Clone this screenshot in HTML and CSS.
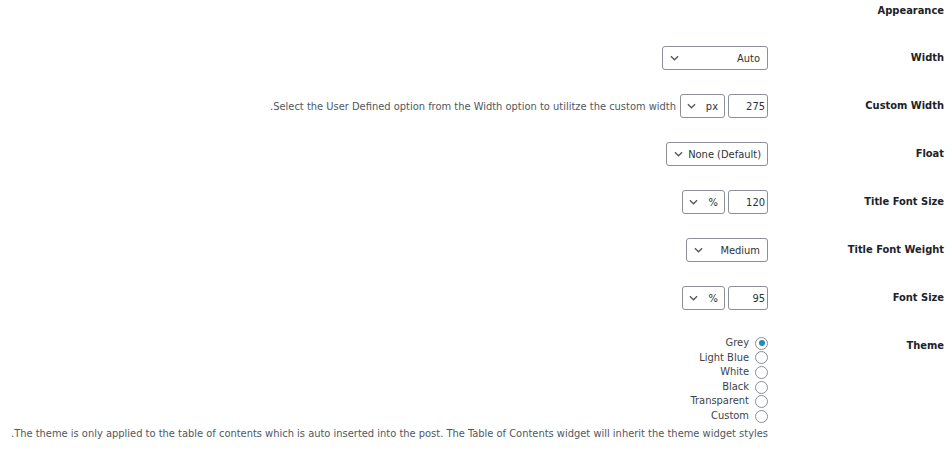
FILE: index.html
```html
<!DOCTYPE html>
<html lang="en" dir="rtl">
<head>
<meta charset="utf-8">
<link rel="stylesheet" href="styles.css">
</head>
<body>
<h2 class="section-title">Appearance</h2>
<div class="form-table">
  <div class="row">
    <div class="th">Width</div>
    <div class="td">
      <div class="select w-auto"><span class="val">Auto</span><svg class="chev" viewBox="0 0 10 6"><path d="M1 1l4 4 4-4"/></svg></div>
    </div>
  </div>
  <div class="row">
    <div class="th">Custom Width</div>
    <div class="td">
      <div class="input w-num">275</div>
      <div class="select w-unit"><span class="val">px</span><svg class="chev" viewBox="0 0 10 6"><path d="M1 1l4 4 4-4"/></svg></div>
      <span class="desc inline">Select the User Defined option from the Width option to utilitze the custom width.</span>
    </div>
  </div>
  <div class="row">
    <div class="th">Float</div>
    <div class="td">
      <div class="select w-float tight"><span class="val">None (Default)</span><svg class="chev" viewBox="0 0 10 6"><path d="M1 1l4 4 4-4"/></svg></div>
    </div>
  </div>
  <div class="row">
    <div class="th">Title Font Size</div>
    <div class="td">
      <div class="input w-num">120</div>
      <div class="select w-pct"><span class="val">%</span><svg class="chev" viewBox="0 0 10 6"><path d="M1 1l4 4 4-4"/></svg></div>
    </div>
  </div>
  <div class="row">
    <div class="th">Title Font Weight</div>
    <div class="td">
      <div class="select w-weight"><span class="val">Medium</span><svg class="chev" viewBox="0 0 10 6"><path d="M1 1l4 4 4-4"/></svg></div>
    </div>
  </div>
  <div class="row">
    <div class="th">Font Size</div>
    <div class="td">
      <div class="input w-num">95</div>
      <div class="select w-pct"><span class="val">%</span><svg class="chev" viewBox="0 0 10 6"><path d="M1 1l4 4 4-4"/></svg></div>
    </div>
  </div>
  <div class="row row-top">
    <div class="th">Theme</div>
    <div class="td td-col">
      <div class="radios">
        <label class="radio-line"><span class="radio checked"></span><span>Grey</span></label>
        <label class="radio-line"><span class="radio"></span><span>Light Blue</span></label>
        <label class="radio-line"><span class="radio"></span><span>White</span></label>
        <label class="radio-line"><span class="radio"></span><span>Black</span></label>
        <label class="radio-line"><span class="radio"></span><span>Transparent</span></label>
        <label class="radio-line"><span class="radio"></span><span>Custom</span></label>
      </div>
      <p class="desc block">The theme is only applied to the table of contents which is auto inserted into the post. The Table of Contents widget will inherit the theme widget styles.</p>
    </div>
  </div>
</div>
</body>
</html>
```

FILE: styles.css
```css
html, body {
  margin: 0;
  padding: 0;
  background: #ffffff;
}
body {
  direction: rtl;
  padding: 0 8px;
  font-family: "DejaVu Sans Condensed", "DejaVu Sans", sans-serif;
  font-stretch: condensed;
  font-size: 11px;
  color: #3c434a;
}
.section-title {
  margin: 0;
  height: 21px;
  padding-top: 1px;
  box-sizing: border-box;
  line-height: 20px;
  font-size: 11px;
  font-weight: bold;
  color: #1d2327;
}
.form-table {
  margin-top: 13px;
  display: flex;
  flex-direction: column;
}
.row {
  display: flex;
  align-items: center;
  height: 48px;
}
.row-top {
  align-items: flex-start;
  height: auto;
  padding-top: 12px;
}
.th {
  flex: 0 0 176px;
  line-height: 24px;
  font-weight: bold;
  color: #1d2327;
}
.td {
  display: flex;
  align-items: center;
  gap: 3px;
}
.td-col {
  flex-direction: column;
  align-items: flex-start;
  gap: 0;
  padding-top: 2px;
}
.select, .input {
  box-sizing: border-box;
  height: 24px;
  border: 1px solid #8c8f94;
  border-radius: 3px;
  background: #fff;
  color: #2c3338;
  display: flex;
  align-items: center;
  padding: 0 7px;
}
.select {
  justify-content: space-between;
}
.select.tight {
  justify-content: flex-start;
  gap: 5px;
}
.chev {
  width: 9px;
  height: 6px;
  fill: none;
  stroke: #50575e;
  stroke-width: 1.4;
}
.w-auto { width: 106px; }
.w-float { width: 102px; padding-right: 6px; }
.w-weight { width: 82px; }
.w-unit { width: 45px; padding: 0 6px; }
.w-pct { width: 43px; padding: 0 6px; }
.w-num { width: 40px; justify-content: flex-start; padding: 0 2px 0 4px; }
.desc {
  color: #50575e;
}
.desc.inline {
  margin-right: 1px;
}
.radios {
  display: flex;
  flex-direction: column;
}
.radio-line {
  display: flex;
  align-items: center;
  gap: 6px;
  height: 14.6px;
  line-height: 14.6px;
}
.radio {
  box-sizing: border-box;
  width: 13px;
  height: 13px;
  border: 1px solid #8c8f94;
  border-radius: 50%;
  background: #fff;
  position: relative;
}
.radio.checked::after {
  content: "";
  position: absolute;
  left: 2.5px;
  top: 2.5px;
  width: 6px;
  height: 6px;
  border-radius: 50%;
  background: #1e8cbe;
}
.desc.block {
  margin: 2px 0 0;
  line-height: 15px;
}
```
